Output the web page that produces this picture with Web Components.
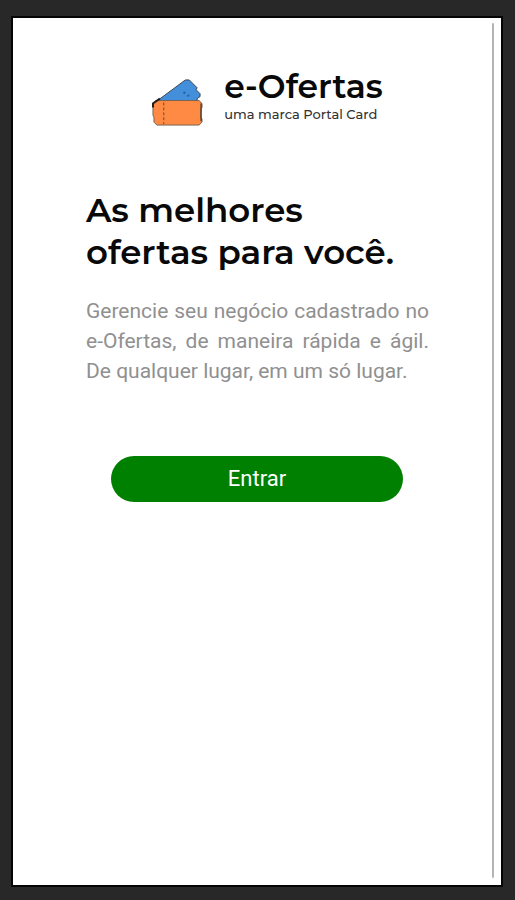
<!DOCTYPE html>
<html lang="pt-BR">
<head>
<meta charset="utf-8">
<meta name="viewport" content="width=device-width, initial-scale=1">
<title>e-Ofertas</title>
<style>
html, body { height: 100%; margin: 0; }
body { background: #282828; font-family: Roboto, sans-serif; color: #090909; }
</style>
</head>
<body>
<device-frame>
  <brand-header name="e-Ofertas" tagline="uma marca Portal Card"></brand-header>
  <welcome-message>
    <span slot="title">As melhores<br>ofertas para você.</span>
    Gerencie seu negócio cadastrado no e-Ofertas, de maneira rápida e ágil. De qualquer lugar, em um só lugar.
  </welcome-message>
  <pill-button>Entrar</pill-button>
</device-frame>
<script>
class DeviceFrame extends HTMLElement {
  constructor() {
    super();
    this.attachShadow({ mode: 'open' }).innerHTML = `
      <style>
        :host { display: flex; box-sizing: border-box; min-height: 100vh; padding: 16px 12px 13px 11px; }
        .screen { flex: 1; display: flex; background: #fff; border: 2px solid #050505; padding: 5px 7px 7px 0; }
        main { flex: 1; min-width: 0; box-sizing: border-box; padding: 42px 63px 24px 73px; }
        .scroll { width: 2px; border-radius: 1px; background: #b4b4b4; }
      </style>
      <div class="screen"><main><slot></slot></main><div class="scroll"></div></div>`;
  }
}
class BrandHeader extends HTMLElement {
  constructor() {
    super();
    this.attachShadow({ mode: 'open' }).innerHTML = `
      <style>
        :host { display: flex; justify-content: center; align-items: flex-start; gap: 21px; font-family: Montserrat, Inter, sans-serif; padding-left: 20px; }
        svg { width: 51px; height: 51px; flex: none; margin-top: 12px; }
        .name { font-size: 33px; line-height: 42px; font-weight: 600; }
        .tag { font-size: 13px; line-height: 14px; font-weight: 500; color: #333; }
        div { white-space: nowrap; }
      </style>
      <svg viewBox="0 0 52 52" aria-hidden="true">
        <path d="M3 26 34 3h4l8 8-1 2 4 4v3l-3 2v4Z" fill="#438fdc" stroke="#39434f" stroke-width="1"/>
        <path d="M33 15v2M37 18v2" stroke="#205a98" stroke-width="2"/>
        <path d="M1 31v-4l3-3h44l3 3v4l-1 2v8l1 2v3l-3 3H5l-3-3v-5l-1-2Z" fill="#ff8a43" stroke="#79634f" stroke-width="1"/>
        <path d="M1 31v-4L8 22" fill="none" stroke="#251f1b" stroke-width="2"/>
        <path d="M50 27v18" stroke="#251f1b" stroke-width="1"/>
        <path d="M12 26v22" stroke="#70492f" stroke-width="1" stroke-dasharray="3 2"/>
      </svg>
      <div><div class="name"></div><div class="tag"></div></div>`;
  }
  connectedCallback() {
    this.shadowRoot.querySelector('.name').textContent = this.getAttribute('name');
    this.shadowRoot.querySelector('.tag').textContent = this.getAttribute('tagline');
  }
}
class WelcomeMessage extends HTMLElement {
  constructor() {
    super();
    this.attachShadow({ mode: 'open' }).innerHTML = `
      <style>
        :host { display: block; margin-top: 61px; }
        h1 { margin: 0; font: 600 34px/42px Montserrat, Inter, sans-serif; white-space: nowrap; }
        p { margin: 23px 0 0; font-size: 21px; line-height: 30px; text-align: justify; color: #909090; }
      </style>
      <h1><slot name="title"></slot></h1><p><slot></slot></p>`;
  }
}
class PillButton extends HTMLElement {
  constructor() {
    super();
    this.attachShadow({ mode: 'open' }).innerHTML = `
      <style>
        :host { display: block; margin: 70px 26px 0 25px; }
        button { display: block; width: 100%; border: 0; border-radius: 24px; padding: 9px 24px; background: #008000; color: #fff; font: 22px/28px Roboto, sans-serif; cursor: pointer; }
      </style>
      <button type="button"><slot></slot></button>`;
  }
}
customElements.define('device-frame', DeviceFrame);
customElements.define('brand-header', BrandHeader);
customElements.define('welcome-message', WelcomeMessage);
customElements.define('pill-button', PillButton);
</script>
</body>
</html>
